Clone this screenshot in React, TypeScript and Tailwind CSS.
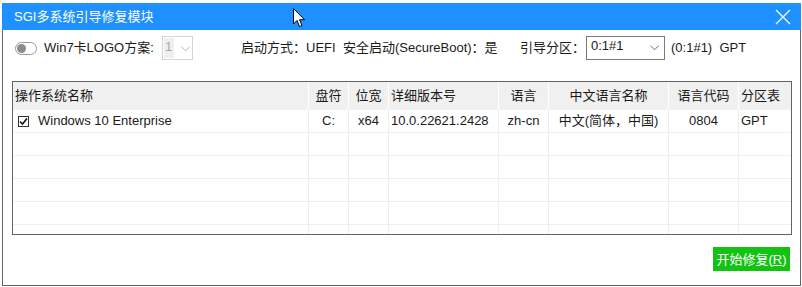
import React from "react";

const font = { fontFamily: '"Liberation Sans", "Noto Sans CJK SC", sans-serif' };

function Chevron({ color = "#6b6b6b" }: { color?: string }) {
  return (
    <svg width="9" height="6" viewBox="0 0 9 6">
      <path d="M0.5 0.8 L4.5 4.8 L8.5 0.8" fill="none" stroke={color} strokeWidth="1" />
    </svg>
  );
}

const cols = [
  { w: 295, h: "操作系统名称", v: "Windows 10 Enterprise", align: "left" },
  { w: 40, h: "盘符", v: "C:", align: "center" },
  { w: 40, h: "位宽", v: "x64", align: "center" },
  { w: 110, h: "详细版本号", v: "10.0.22621.2428", align: "left" },
  { w: 50, h: "语言", v: "zh-cn", align: "center" },
  { w: 120, h: "中文语言名称", v: "中文(简体，中国)", align: "center" },
  { w: 70, h: "语言代码", v: "0804", align: "center" },
  { w: 53, h: "分区表", v: "GPT", align: "left" },
];

export default function App() {
  return (
    <div className="relative w-[802px] h-[287px] bg-white pt-[3px] pl-[2px] overflow-hidden text-[13px] text-[#1a1a1a]" style={font}>
      <div className="w-[799px] h-[283px] flex flex-col">
        {/* title bar */}
        <div className="h-[27px] bg-[#1e90ff] flex items-center justify-between pl-[12px] pr-[10px] text-white">
          <span className="leading-none">SGI多系统引导修复模块</span>
          <svg width="16" height="16" viewBox="0 0 16 16">
            <path d="M1 1 L15 15 M15 1 L1 15" stroke="white" strokeWidth="1.3" />
          </svg>
        </div>
        {/* body */}
        <div className="flex-1 border-x border-b border-[#646464] flex flex-col pl-[9px]">
          {/* toolbar */}
          <div className="flex items-center h-[24px] mt-[6px]">
            <div className="ml-[3px] w-[22px] h-[13px] rounded-full border border-[#9a9a9a] bg-white flex items-center pl-[1px]">
              <div className="w-[9px] h-[9px] rounded-full bg-[#8c8c8c]" />
            </div>
            <span className="ml-[7px] w-[118px]">Win7卡LOGO方案:</span>
            <div className="w-[31px] h-[24px] border border-[#d4d4d4] flex items-start pt-[1px] pl-[1px]">
              <div className="w-[10px] h-[20px] bg-[#efefef] text-[#a8a8a8] leading-[18px] pl-[1px]">1</div>
              <div className="ml-[7px] mt-[8px]">
                <Chevron color="#b5b5b5" />
              </div>
            </div>
            <span className="ml-[48px] w-[102px]">启动方式：UEFI</span>
            <span className="w-[177px]">安全启动(SecureBoot)：是</span>
            <span className="w-[66px]">引导分区：</span>
            <div className="w-[79px] h-[24px] border border-[#7a7a7a] flex items-start justify-between pl-[4px] pr-[5px]">
              <span className="leading-[18px]">0:1#1</span>
              <div className="mt-[8px]">
                <Chevron />
              </div>
            </div>
            <span className="ml-[6px]">(0:1#1)&nbsp;&nbsp;GPT</span>
          </div>
          {/* table */}
          <div className="mt-[21px] w-[780px] h-[154px] border border-[#646464] overflow-hidden">
            <div className="flex h-[28px] bg-[#f0f0f0]">
              {cols.map((c, i) => (
                <div
                  key={i}
                  className={`flex items-center h-full ${i > 0 ? "border-l border-white" : ""} ${c.align === "center" ? "justify-center" : "pl-[2px]"}`}
                  style={{ width: c.w }}
                >
                  {c.h}
                </div>
              ))}
            </div>
            <div className="flex h-[23px] border-b border-[#efefef]">
              {cols.map((c, i) => (
                <div
                  key={i}
                  className={`flex items-center h-full ${i > 0 ? "border-l border-[#efefef]" : "pl-[5px]"} ${c.align === "center" ? "justify-center" : i > 0 ? "pl-[2px]" : ""}`}
                  style={{ width: c.w }}
                >
                  {i === 0 && (
                    <div className="w-[11px] h-[11px] border border-[#333] mr-[9px] flex items-center justify-center bg-white">
                      <svg width="9" height="9" viewBox="0 0 9 9">
                        <path d="M1 4.5 L3.5 7 L8 1.5" fill="none" stroke="#111" strokeWidth="1.6" />
                      </svg>
                    </div>
                  )}
                  {c.v}
                </div>
              ))}
            </div>
            {[0, 1, 2, 3, 4].map((r) => (
              <div key={r} className="flex h-[23px] border-b border-[#efefef]">
                {cols.map((c, i) => (
                  <div key={i} className={`h-full ${i > 0 ? "border-l border-[#efefef]" : ""}`} style={{ width: c.w }} />
                ))}
              </div>
            ))}
          </div>
          {/* button */}
          <div className="flex justify-end mr-[10px] mt-[12px]">
            <div className="w-[77px] h-[24px] bg-[#12c312] text-white flex items-center justify-center leading-none">
              开始修复(<span className="underline">R</span>)
            </div>
          </div>
        </div>
      </div>
      {/* mouse cursor */}
      <svg className="absolute left-[293px] top-[8px]" width="13" height="20" viewBox="0 0 13 20">
        <path d="M0.5 0.5 L0.5 16 L4 12.5 L6.5 18.5 L9 17.5 L6.5 11.7 L11.5 11.7 Z" fill="white" stroke="black" strokeWidth="1" strokeLinejoin="round" />
      </svg>
    </div>
  );
}
